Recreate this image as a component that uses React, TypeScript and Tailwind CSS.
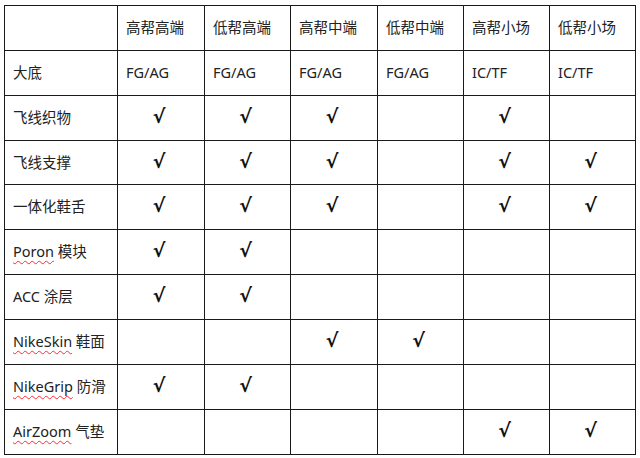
const heads = ['高帮高端', '低帮高端', '高帮中端', '低帮中端', '高帮小场', '低帮小场'];

type Row = { label: string; en?: string; cells: (string | boolean)[] };

const rows: Row[] = [
  { label: '大底', cells: ['FG/AG', 'FG/AG', 'FG/AG', 'FG/AG', 'IC/TF', 'IC/TF'] },
  { label: '飞线织物', cells: [true, true, true, false, true, false] },
  { label: '飞线支撑', cells: [true, true, true, false, true, true] },
  { label: '一体化鞋舌', cells: [true, true, true, false, true, true] },
  { label: ' 模块', en: 'Poron', cells: [true, true, false, false, false, false] },
  { label: 'ACC 涂层', cells: [true, true, false, false, false, false] },
  { label: ' 鞋面', en: 'NikeSkin', cells: [false, false, true, true, false, false] },
  { label: ' 防滑', en: 'NikeGrip', cells: [true, true, false, false, false, false] },
  { label: ' 气垫', en: 'AirZoom', cells: [false, false, false, false, true, true] },
];

const widths = ['w-[113px]', 'w-[87px]', 'w-[86px]', 'w-[87px]', 'w-[86px]', 'w-[86px]', 'w-[86px]'];

function Check() {
  return (
    <span className="inline-block text-[19px] font-bold leading-none text-[#111] [font-family:'DejaVu_Sans',sans-serif]">
      √
    </span>
  );
}

export default function App() {
  return (
    <div className="w-[640px] h-[458px] bg-white pt-[5px] pl-[4px] text-[14.5px] text-[#222] [font-family:'Noto_Sans','Noto_Sans_CJK_SC',sans-serif]">
      <table className="border-collapse table-fixed">
        <colgroup>
          {widths.map((w, i) => (
            <col key={i} className={w} />
          ))}
        </colgroup>
        <tbody>
          <tr className="h-[45px]">
            <td className="border border-[#1a1a1a] p-0"></td>
            {heads.map((h) => (
              <td key={h} className="border border-[#1a1a1a] pl-2 p-0 align-middle">
                {h}
              </td>
            ))}
          </tr>
          {rows.map((r, ri) => (
            <tr key={ri} className={ri === 2 ? 'h-[44px]' : 'h-[45px]'}>
              <td className="border border-[#1a1a1a] pl-2 p-0 align-middle whitespace-nowrap">
                {r.en && (
                  <span className="underline decoration-wavy decoration-red-500 decoration-1 underline-offset-[3px]">
                    {r.en}
                  </span>
                )}
                {r.label}
              </td>
              {r.cells.map((c, ci) =>
                typeof c === 'string' ? (
                  <td key={ci} className="border border-[#1a1a1a] pl-2 p-0 align-middle">
                    {c}
                  </td>
                ) : (
                  <td key={ci} className="border border-[#1a1a1a] p-0 pr-1 text-center align-middle">
                    {c && <Check />}
                  </td>
                )
              )}
            </tr>
          ))}
        </tbody>
      </table>
    </div>
  );
}
